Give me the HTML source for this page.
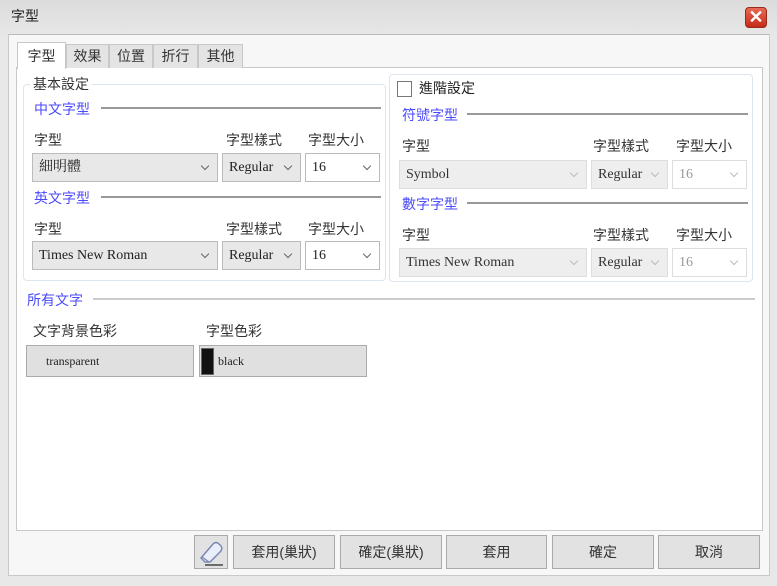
<!DOCTYPE html>
<html><head><meta charset="utf-8"><style>
*{box-sizing:border-box;margin:0;padding:0}
body{width:777px;height:586px;position:relative;overflow:hidden;background:linear-gradient(#dcdcdc,#e8e8e8 40px,#e8e8e8);font-family:"Liberation Sans","Noto Sans CJK TC",sans-serif;font-size:14px;color:#333}
.a{position:absolute}
.serif{font-family:"Liberation Serif","Noto Serif CJK SC",serif}
.sel{position:absolute;height:29px;border:1px solid #bbb;background:#e8e8e8;font-family:"Liberation Serif","Noto Serif CJK SC",serif;font-size:14px;line-height:27px;padding-left:6px;color:#222}
.sel.w{background:#fff}
.sel.d{background:#eee;border-color:#ddd;color:#333}
.sel.d.w{background:#fff;color:#999}
.sel:after{content:"";position:absolute;right:9px;top:9px;width:5px;height:5px;border-right:1px solid #666;border-bottom:1px solid #666;transform:rotate(45deg)}
.sel.d:after{border-color:#bbb}
.lbl{position:absolute;font-size:14px;color:#333;top:0}
.sec{position:absolute;color:#4a4aff;font-size:14px}
.line{position:absolute;height:2px;background:#999}
.btn{position:absolute;top:535px;height:34px;border:1px solid #aaa;background:#e2e2e2;text-align:center;line-height:32px;font-size:14px;color:#333}
.tab{position:absolute;top:44px;height:24px;border:1px solid #c8c8c8;border-bottom:none;background:#e4e4e4;text-align:center;line-height:23px;font-size:14px}
</style></head><body>
<div class="a" style="left:11px;top:6px;font-size:14px;color:#222">字型</div>
<div class="a" style="left:745px;top:7px;width:22px;height:21px;border-radius:4px;background:linear-gradient(#e86a55,#c62a18);border:1px solid #9a2a1a;color:#fff;text-align:center;line-height:19px;font-size:18px;font-weight:bold">✕</div>
<div class="a" style="left:8px;top:34px;width:762px;height:542px;background:#f7f7f7;border:1px solid #c9c9c9;border-top-color:#bbb"></div>
<div class="a" style="left:16px;top:67px;width:747px;height:464px;background:#fff;border:1px solid #c8c8c8"></div>
<div class="tab" style="left:17px;top:42px;width:49px;height:27px;background:#fff;line-height:27px">字型</div>
<div class="tab" style="left:66px;width:43px">效果</div>
<div class="tab" style="left:109px;width:44px">位置</div>
<div class="tab" style="left:153px;width:45px">折行</div>
<div class="tab" style="left:198px;width:45px">其他</div>

<div class="a" style="left:23px;top:84px;width:363px;height:197px;border:1px solid #dde6ee;border-radius:4px"></div>
<div class="a" style="left:30px;top:74px;background:#fff;padding:0 3px;font-size:14px">基本設定</div>
<div class="sec" style="left:34px;top:99px">中文字型</div><div class="line" style="left:101px;top:107px;width:280px"></div>
<div class="lbl" style="left:34px;top:130px">字型</div>
<div class="lbl" style="left:226px;top:130px">字型樣式</div>
<div class="lbl" style="left:308px;top:130px">字型大小</div>
<div class="sel" style="left:32px;top:153px;width:186px">細明體</div>
<div class="sel" style="left:222px;top:153px;width:79px">Regular</div>
<div class="sel w" style="left:305px;top:153px;width:75px">16</div>
<div class="sec" style="left:34px;top:188px">英文字型</div><div class="line" style="left:101px;top:196px;width:280px"></div>
<div class="lbl" style="left:34px;top:219px">字型</div>
<div class="lbl" style="left:226px;top:219px">字型樣式</div>
<div class="lbl" style="left:308px;top:219px">字型大小</div>
<div class="sel" style="left:32px;top:241px;width:186px">Times New Roman</div>
<div class="sel" style="left:222px;top:241px;width:79px">Regular</div>
<div class="sel w" style="left:305px;top:241px;width:75px">16</div>

<div class="a" style="left:389px;top:74px;width:364px;height:208px;border:1px solid #dde6ee;border-radius:4px"></div>
<div class="a" style="left:397px;top:81px;width:15px;height:16px;border:1px solid #777;background:#fff"></div>
<div class="a" style="left:419px;top:78px;font-size:14px;color:#222">進階設定</div>
<div class="sec" style="left:402px;top:105px">符號字型</div><div class="line" style="left:467px;top:113px;width:281px"></div>
<div class="lbl" style="left:402px;top:136px">字型</div>
<div class="lbl" style="left:593px;top:136px">字型樣式</div>
<div class="lbl" style="left:676px;top:136px">字型大小</div>
<div class="sel d" style="left:399px;top:160px;width:188px">Symbol</div>
<div class="sel d" style="left:591px;top:160px;width:77px">Regular</div>
<div class="sel d w" style="left:672px;top:160px;width:75px">16</div>
<div class="sec" style="left:402px;top:194px">數字字型</div><div class="line" style="left:467px;top:202px;width:281px"></div>
<div class="lbl" style="left:402px;top:225px">字型</div>
<div class="lbl" style="left:593px;top:225px">字型樣式</div>
<div class="lbl" style="left:676px;top:225px">字型大小</div>
<div class="sel d" style="left:399px;top:248px;width:188px">Times New Roman</div>
<div class="sel d" style="left:591px;top:248px;width:77px">Regular</div>
<div class="sel d w" style="left:672px;top:248px;width:75px">16</div>

<div class="sec" style="left:27px;top:290px">所有文字</div><div class="line" style="left:93px;top:298px;width:662px;background:#ccc"></div>
<div class="lbl" style="left:33px;top:321px">文字背景色彩</div>
<div class="lbl" style="left:206px;top:321px">字型色彩</div>
<div class="a serif" style="left:26px;top:345px;width:168px;height:32px;border:1px solid #aaa;background:#e0e0e0;font-size:12px;line-height:30px;padding-left:19px;color:#222">transparent</div>
<div class="a serif" style="left:199px;top:345px;width:168px;height:32px;border:1px solid #aaa;background:#e0e0e0;font-size:12px;line-height:30px;padding-left:18px;color:#222">black</div>
<div class="a" style="left:201px;top:348px;width:13px;height:27px;background:#111;border:1px solid #666"></div>

<div class="btn" style="left:194px;width:34px"><svg width="30" height="30" viewBox="0 0 30 30" style="margin-top:1px"><path d="M5 21 L17 7 Q20 4 23 7 L25 9 Q27 12 24 15 L14 25 L9 25 Z" fill="#e8eefa" stroke="#7a86b0" stroke-width="1.4"/><path d="M6 20 L13 25" stroke="#7a86b0" stroke-width="1.2"/><path d="M9 28 H27" stroke="#444" stroke-width="1.6"/></svg></div>
<div class="btn" style="left:233px;width:102px">套用(巢狀)</div>
<div class="btn" style="left:340px;width:102px">確定(巢狀)</div>
<div class="btn" style="left:446px;width:101px">套用</div>
<div class="btn" style="left:552px;width:102px">確定</div>
<div class="btn" style="left:658px;width:102px">取消</div>
</body></html>
